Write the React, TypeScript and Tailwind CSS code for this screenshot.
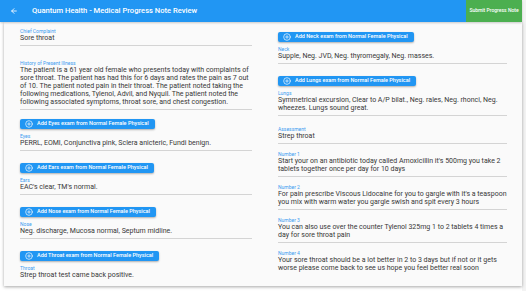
import { ArrowLeft, CirclePlus } from "lucide-react";

type Field = {
  label: string;
  value: string;
  button?: string;
  last?: boolean;
};

const leftFields: Field[] = [
  { label: "Chief Complaint", value: "Sore throat" },
  {
    label: "History of Present Illness",
    value:
      "The patient is a 61 year old female who presents today with complaints of sore throat. The patient has had this for 6 days and rates the pain as 7 out of 10. The patient noted pain in their throat. The patient noted taking the following medications, Tylenol, Advil, and Nyquil. The patient noted the following associated symptoms, throat sore, and chest congestion.",
  },
  { label: "Eyes", value: "PERRL, EOMI, Conjunctiva pink, Sclera anicteric, Fundi benign.", button: "Eyes" },
  { label: "Ears", value: "EAC's clear, TM's normal.", button: "Ears" },
  { label: "Nose", value: "Neg. discharge, Mucosa normal, Septum midline.", button: "Nose" },
  { label: "Throat", value: "Strep throat test came back positive.", button: "Throat", last: true },
];

const rightFields: Field[] = [
  { label: "Neck", value: "Supple, Neg. JVD, Neg. thyromegaly, Neg. masses.", button: "Neck" },
  {
    label: "Lungs",
    value: "Symmetrical excursion, Clear to A/P bilat., Neg. rales, Neg. rhonci, Neg. wheezes. Lungs sound great.",
    button: "Lungs",
  },
  { label: "Assessment", value: "Strep throat" },
  {
    label: "Number 1",
    value: "Start your on an antibiotic today called Amoxicillin it's 500mg you take 2 tablets together once per day for 10 days",
  },
  {
    label: "Number 2",
    value: "For pain prescribe Viscous Lidocaine for you to gargle with it's a teaspoon you mix with warm water you gargle swish and spit every 3 hours",
  },
  {
    label: "Number 3",
    value: "You can also use over the counter Tylenol 325mg 1 to 2 tablets 4 times a day for sore throat pain",
  },
  {
    label: "Number 4",
    value: "Your sore throat should be a lot better in 2 to 3 days but if not or it gets worse please come back to see us hope you feel better real soon",
    last: true,
  },
];

function AddButton({ part }: { part: string }) {
  return (
    <div className="flex">
      <button className="flex items-center gap-[4px] h-[10px] pl-[5px] pr-[6px] rounded-[2px] bg-[#2196f3] text-white text-[5.5px] font-medium leading-none shadow-[0_1px_2px_rgba(0,0,0,0.3)]">
        <CirclePlus className="w-[8px] h-[8px]" strokeWidth={2} />
        <span>Add {part} exam from Normal Female Physical</span>
      </button>
    </div>
  );
}

function FieldBlock({ field, gap }: { field: Field; gap: string }) {
  return (
    <div className={gap}>
      {field.button && (
        <div className="mb-[4px]">
          <AddButton part={field.button} />
        </div>
      )}
      <div className={field.last ? "" : "border-b border-[#d4d4d4] pb-[3px]"}>
        <div className="text-[5px] leading-[6px] text-[#3d9cf0]">{field.label}</div>
        <div className="text-[7px] leading-[8px] text-[#383838]">{field.value}</div>
      </div>
    </div>
  );
}

export default function App() {
  return (
    <div className="flex w-[526px] h-[291px] bg-[#f3f3f3] font-['Roboto',sans-serif] overflow-hidden">
      <div className="w-[522px] h-full flex flex-col bg-white">
        <header className="flex h-[22px] shrink-0 bg-[#2196f3] text-white shadow-[0_1px_2px_rgba(0,0,0,0.2)] z-10">
          <div className="flex flex-1 items-center">
            <ArrowLeft className="w-[8px] h-[8px] ml-[10px]" strokeWidth={2.5} />
            <span className="ml-[14px] text-[7.6px] font-medium">Quantum Health - Medical Progress Note Review</span>
          </div>
          <div className="flex items-center justify-center w-[56px] bg-[#4caf50] text-[5px] font-medium">
            Submit Progress Note
          </div>
        </header>
        <div className="flex-1 pl-[4px] pb-[5px]">
          <div className="h-full bg-[#fafafa] shadow-[0_1px_3px_rgba(0,0,0,0.35)] pl-[16px] pr-[15px] pt-[6px] grid grid-cols-[232px_229px] gap-x-[26px]">
            <div>
              {leftFields.map((f, i) => (
                <FieldBlock
                  key={f.label}
                  field={f}
                  gap={i === 0 ? "" : i === 1 ? "mt-[14px]" : i === 2 ? "mt-[9px]" : "mt-[12px]"}
                />
              ))}
            </div>
            <div className="pt-[4px]">
              {rightFields.map((f, i) => (
                <FieldBlock
                  key={f.label}
                  field={f}
                  gap={i === 0 ? "" : i === 1 ? "mt-[12px]" : i === 2 ? "mt-[10px]" : "mt-[7px]"}
                />
              ))}
            </div>
          </div>
        </div>
      </div>
      <div className="w-[4px]" />
    </div>
  );
}
